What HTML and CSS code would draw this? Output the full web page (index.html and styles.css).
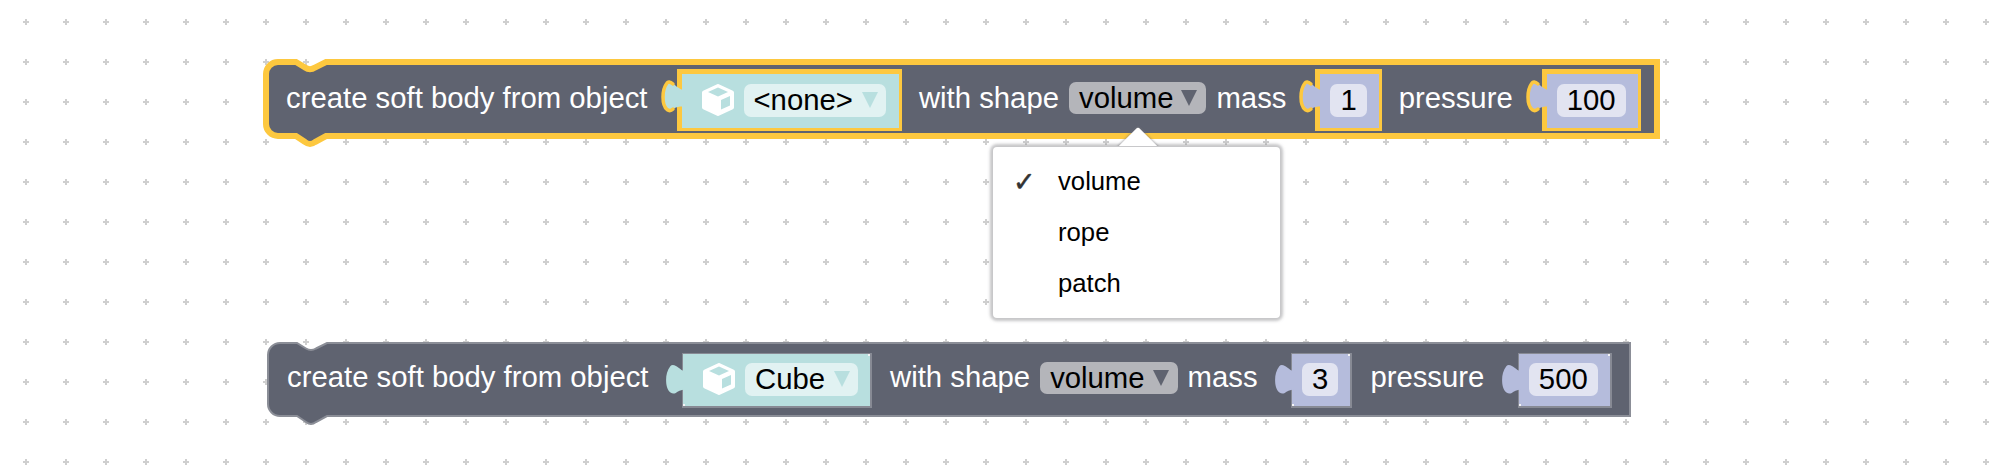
FILE: index.html
```html
<!DOCTYPE html>
<html lang="en">
<head>
<meta charset="utf-8">
<title>Soft body blocks</title>
<link rel="stylesheet" href="styles.css">
</head>
<body>
<svg width="0" height="0" class="defs">
  <defs>
    <symbol id="cube" viewBox="0 0 32 32">
      <path d="M16 2 30 8.500V23.500L16 30 2 23.500V8.500Z" fill="#fff" stroke="#fff" stroke-width="4" stroke-linejoin="round"/>
      <path d="M16 3.500 26 8 16 12.500 6 8Z" class="cube-face"/>
      <path d="M19 16 28 12V21.500L19 25.500Z" class="cube-face"/>
    </symbol>
  </defs>
</svg>
<main class="canvas">
  <svg class="grid" width="2000" height="476">
    <defs>
      <pattern id="dots" x="6" y="2" width="40" height="40" patternUnits="userSpaceOnUse">
        <path d="M17 20h6M20 17v6" stroke="#cfcfcf" stroke-width="2" fill="none"/>
      </pattern>
    </defs>
    <rect width="2000" height="476" fill="url(#dots)"/>
  </svg>

  <section class="block selected">
    <svg class="outline" width="1391" height="74">
      <path d="M12 0H30L39 5.500Q44 9 49 5.500L60 0H1391V74H60L49 80Q44 84 39 80L30 74H12A12 12 0 0 1 0 62V12A12 12 0 0 1 12 0Z"/>
    </svg>
    <span class="label">create soft body from object</span>
    <div class="input teal">
      <svg class="tab" viewBox="0 0 21 32"><path class="tab-fill" d="M21 9C17 8 13 4 10 2 8 .5 6 .5 5 2 2 6 1 11 1 16 1 21 2 26 5 28.500 7 30 9 30 11 28 14 26 17 25.500 21 25.500Z"/><path class="tab-edge" d="M11 3C8 .5 6 .5 5 2 2 6 1 11 1 16 1 21 2 26 5 28.500 7 30 9 30 11 28"/></svg>
      <div class="body">
        <svg class="cube"><use href="#cube"/></svg>
        <div class="field"><span>&lt;none&gt;</span><i class="arrow"></i></div>
      </div>
    </div>
    <span class="label">with shape</span>
    <div class="pill"><span>volume</span><i class="arrow"></i></div>
    <span class="label">mass</span>
    <div class="input purple">
      <svg class="tab" viewBox="0 0 21 32"><path class="tab-fill" d="M21 9C17 8 13 4 10 2 8 .5 6 .5 5 2 2 6 1 11 1 16 1 21 2 26 5 28.500 7 30 9 30 11 28 14 26 17 25.500 21 25.500Z"/><path class="tab-edge" d="M11 3C8 .5 6 .5 5 2 2 6 1 11 1 16 1 21 2 26 5 28.500 7 30 9 30 11 28"/></svg>
      <div class="body"><div class="field num"><span>1</span></div></div>
    </div>
    <span class="label">pressure</span>
    <div class="input purple">
      <svg class="tab" viewBox="0 0 21 32"><path class="tab-fill" d="M21 9C17 8 13 4 10 2 8 .5 6 .5 5 2 2 6 1 11 1 16 1 21 2 26 5 28.500 7 30 9 30 11 28 14 26 17 25.500 21 25.500Z"/><path class="tab-edge" d="M11 3C8 .5 6 .5 5 2 2 6 1 11 1 16 1 21 2 26 5 28.500 7 30 9 30 11 28"/></svg>
      <div class="body"><div class="field num"><span>100</span></div></div>
    </div>
  </section>

  <div class="menu">
    <i class="menu-arrow"></i>
    <div class="item"><span class="check">✓</span><span>volume</span></div>
    <div class="item"><span class="check"></span><span>rope</span></div>
    <div class="item"><span class="check"></span><span>patch</span></div>
  </div>

  <section class="block plain">
    <svg class="outline" width="1362" height="73">
      <path d="M12 0H29L38 5.500Q43 8.500 48 5.500L59 0H1362V73H59L48 79Q43 83 38 79L29 73H12A12 12 0 0 1 0 61V12A12 12 0 0 1 12 0Z"/>
    </svg>
    <span class="label">create soft body from object</span>
    <div class="input teal">
      <svg class="tab" viewBox="0 0 21 32" preserveAspectRatio="none"><path class="tab-fill" d="M21 9C17 8 13 4 10 2 8 .5 6 .5 5 2 2 6 1 11 1 16 1 21 2 26 5 28.500 7 30 9 30 11 28 14 26 17 25.500 21 25.500Z"/></svg>
      <div class="body">
        <svg class="cube"><use href="#cube"/></svg>
        <div class="field"><span>Cube</span><i class="arrow"></i></div>
      </div>
    </div>
    <span class="label">with shape</span>
    <div class="pill"><span>volume</span><i class="arrow"></i></div>
    <span class="label">mass</span>
    <div class="input purple">
      <svg class="tab" viewBox="0 0 21 32" preserveAspectRatio="none"><path class="tab-fill" d="M21 9C17 8 13 4 10 2 8 .5 6 .5 5 2 2 6 1 11 1 16 1 21 2 26 5 28.500 7 30 9 30 11 28 14 26 17 25.500 21 25.500Z"/></svg>
      <div class="body"><div class="field num"><span>3</span></div></div>
    </div>
    <span class="label">pressure</span>
    <div class="input purple">
      <svg class="tab" viewBox="0 0 21 32" preserveAspectRatio="none"><path class="tab-fill" d="M21 9C17 8 13 4 10 2 8 .5 6 .5 5 2 2 6 1 11 1 16 1 21 2 26 5 28.500 7 30 9 30 11 28 14 26 17 25.500 21 25.500Z"/></svg>
      <div class="body"><div class="field num"><span>500</span></div></div>
    </div>
  </section>
</main>
</body>
</html>
```
FILE: styles.css
```css
* { box-sizing: border-box; }

html, body {
  margin: 0;
  background: #fff;
}

body {
  font-family: "Liberation Sans", Arial, sans-serif;
  font-size: 29.300px;
}

.defs { position: absolute; }

.canvas {
  position: relative;
  width: 2000px;
  height: 476px;
  overflow: hidden;
  background: #fff;
}

.grid { position: absolute; left: 0; top: 0; }

/* blocks sit on a free canvas */
.block {
  position: absolute;
  display: flex;
  align-items: center;
  padding-left: 20px;
}

.selected { left: 266px; top: 62px; width: 1391px; height: 74px; }
.plain { left: 268px; top: 343px; width: 1362px; height: 73px; padding-left: 19px; }

.outline {
  position: absolute;
  left: 0;
  top: 0;
  overflow: visible;
}
.outline path { fill: #5f6370; }
.selected .outline path { stroke: #fdc83f; stroke-width: 6; }
.plain .outline path { stroke: #8b8e97; stroke-width: 2; }

.label {
  position: relative;
  color: #fff;
  white-space: nowrap;
  line-height: 1;
  margin-top: -2px;
}
.plain .label { margin-top: -5px; }

/* value inputs */
.input {
  position: relative;
  display: flex;
  align-items: flex-start;
  margin-top: 2px;
}
.selected .input { margin-left: 14px; margin-right: 17px; }
.plain .input { margin-left: 16.500px; margin-right: 18px; }

.tab {
  position: relative;
  z-index: 1;
  flex: none;
  width: 21px;
  height: 32px;
  margin-right: -6px;
  margin-top: 12px;
  overflow: visible;
}
.plain .tab { width: 23px; margin-top: 11px; }

.teal .tab-fill { fill: #b8dfdf; }
.purple .tab-fill { fill: #b5bcdc; }
.tab-edge {
  fill: none;
  stroke: #fdc83f;
  stroke-width: 3.500;
  stroke-linecap: round;
}

.body {
  display: flex;
  align-items: flex-start;
}
.teal .body { background: #b8dfdf; }
.purple .body { background: #b5bcdc; }

.selected .body {
  height: 62px;
  padding: 10px 12px 0 10px;
  border-style: solid;
  border-color: #fdc83f;
  border-width: 5px 3px 3px 5px;
}
.selected .teal .body { padding-left: 20px; padding-right: 13px; }

.plain .body {
  position: relative;
  height: 55px;
  padding: 9px 12px 0 10px;
  border-style: solid;
  border-color: #878a94;
  border-width: 1px 2px 2px 1px;
}
.plain .teal .body { padding-left: 20px; }
.plain .body::before,
.plain .body::after {
  content: "";
  position: absolute;
  width: 2px;
  height: 2px;
  background: #f4f4f6;
}
.plain .body::before { right: 0; top: 0; }
.plain .body::after { left: 0; bottom: 0; }

.cube {
  flex: none;
  width: 32px;
  height: 32px;
  margin-right: 10px;
}
.cube-face { fill: #b8dfdf; }

.field {
  display: flex;
  align-items: center;
  height: 33px;
  padding: 0 8px 2px 10px;
  border-radius: 7px;
  color: #000;
  line-height: 1;
  white-space: nowrap;
}
.teal .field { background: #e1f2f2; }
.purple .field { background: #e2e4f1; }
.num { padding: 0 10px 2px; }

.arrow {
  flex: none;
  width: 0;
  height: 0;
  margin-left: 9px;
  border-style: solid;
  border-width: 16px 8px 0;
  border-color: #b8dfdf transparent transparent;
}

.pill {
  position: relative;
  display: flex;
  align-items: center;
  height: 32px;
  margin: -2px 10px 0;
  padding: 0 9px 0 10px;
  border-radius: 7px;
  background: #b4b5ba;
  color: #000;
  line-height: 1;
  white-space: nowrap;
}
.plain .pill { margin-top: -4px; }
.pill .arrow { border-top-color: #5f6370; margin-left: 8px; }

/* dropdown overlay */
.menu {
  position: absolute;
  left: 993px;
  top: 147px;
  width: 287px;
  height: 171px;
  padding: 9px 0;
  background: #fff;
  border-radius: 4px;
  box-shadow: 0 0 3px 3px rgba(120, 120, 125, .42);
  font-size: 25.700px;
  color: #000;
}
.menu-arrow {
  position: absolute;
  left: 130px;
  top: -14px;
  width: 30px;
  height: 30px;
  background: #fff;
  border-radius: 3px 0 0 0;
  transform: rotate(45deg);
  box-shadow: -1px -1px 2px rgba(120, 120, 125, .45);
  clip-path: polygon(-10% -10%, 100% -10%, -10% 100%);
}
.item {
  display: flex;
  align-items: center;
  height: 51px;
}
.check {
  width: 65px;
  padding-left: 20px;
  font-family: "DejaVu Sans", sans-serif;
  font-size: 27px;
  color: #333;
  -webkit-text-stroke: .5px #333;
}
```
